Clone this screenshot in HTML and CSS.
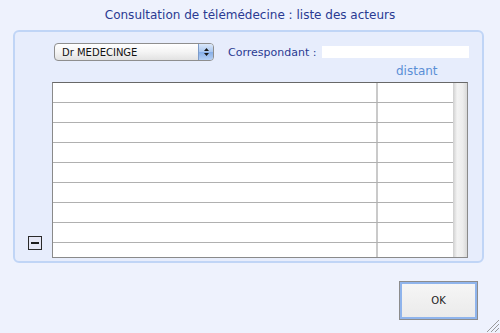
FILE: index.html
```html
<!doctype html>
<html>
<head>
<meta charset="utf-8">
<link rel="stylesheet" href="styles.css">
<title>Consultation de télémédecine</title>
</head>
<body>
<h1 class="title">Consultation de télémédecine : liste des acteurs</h1>

<div class="panel">
  <div class="top-row">
    <div class="popup">
      <span class="popup-text">Dr MEDECINGE</span>
      <span class="stepper">
        <svg width="7" height="10" viewBox="0 0 7 10"><path d="M3.5 1 L6 4 L1 4 Z M3.5 9 L6 6 L1 6 Z" fill="#1a1a1a"/></svg>
      </span>
    </div>
    <span class="label">Correspondant :</span>
    <span class="field"></span>
  </div>

  <div class="head-row"><span class="col-head">distant</span></div>

  <div class="list-row">
    <span class="minus-btn"><span class="minus-bar"></span></span>
    <div class="grid">
      <div class="rows">
        <div class="row"><span class="c1"></span><span class="c2"></span></div>
        <div class="row"><span class="c1"></span><span class="c2"></span></div>
        <div class="row"><span class="c1"></span><span class="c2"></span></div>
        <div class="row"><span class="c1"></span><span class="c2"></span></div>
        <div class="row"><span class="c1"></span><span class="c2"></span></div>
        <div class="row"><span class="c1"></span><span class="c2"></span></div>
        <div class="row"><span class="c1"></span><span class="c2"></span></div>
        <div class="row"><span class="c1"></span><span class="c2"></span></div>
        <div class="row"><span class="c1"></span><span class="c2"></span></div>
      </div>
      <div class="scroll"></div>
    </div>
  </div>
</div>

<div class="footer">
  <button class="ok">OK</button>
</div>

<svg class="grip" width="13" height="13" viewBox="0 0 13 13">
  <path d="M1 13 L13 1 M5 13 L13 5 M9 13 L13 9" stroke="#9a9a9a" stroke-width="1"/>
</svg>
</body>
</html>
```

FILE: styles.css
```css
html, body {
    margin: 0;
    padding: 0;
}
body {
    width: 500px;
    height: 333px;
    background-color: #eef2fd;
    font-family: "DejaVu Sans", Verdana, sans-serif;
    position: relative;
    overflow: hidden;
}
.title {
    margin: 0;
    padding: 8px 0;
    font-size: 12px;
    font-weight: normal;
    line-height: 14px;
    text-align: center;
    color: #2a3a92;
}
.panel {
    margin: 0 16px 0 13px;
    border: 2px solid #c0d5f6;
    border-radius: 6px;
    background-color: #e7edfc;
    padding: 11px 0 3px 0;
}
.top-row {
    display: flex;
    align-items: center;
    height: 18px;
}
.popup {
    margin-left: 39px;
    width: 160px;
    height: 18px;
    box-sizing: border-box;
    border: 1px solid #8e8e8e;
    border-radius: 4px;
    background: linear-gradient(#ffffff, #f4f4f4 50%, #e2e2e2);
    display: flex;
    align-items: center;
    overflow: hidden;
}
.popup-text {
    flex: 1;
    padding-left: 7px;
    font-size: 10px;
    color: #111;
}
.stepper {
    width: 14px;
    height: 16px;
    display: flex;
    align-items: center;
    justify-content: center;
    border-left: 1px solid #7d9cc9;
    background: linear-gradient(#dbe8fa, #a8c6ef 50%, #86aee8 51%, #b5d0f4);
}
.label {
    margin-left: 14px;
    font-size: 11px;
    color: #2a3a92;
}
.field {
    margin-left: 6px;
    width: 147px;
    height: 12px;
    background-color: #ffffff;
}
.head-row {
    margin-top: 3px;
    height: 14px;
    display: flex;
}
.col-head {
    margin-left: 381px;
    font-size: 12px;
    line-height: 14px;
    color: #5b8fd6;
}
.list-row {
    margin-top: 4px;
    display: flex;
    align-items: flex-end;
}
.minus-btn {
    margin: 0 0 8px 13px;
    width: 14px;
    height: 14px;
    box-sizing: border-box;
    border: 1px solid #2a2a2a;
    background-color: #e4e6f4;
    display: flex;
    align-items: center;
    justify-content: center;
}
.minus-bar {
    width: 8px;
    height: 2px;
    background-color: #1a1a1a;
}
.grid {
    margin-left: 10px;
    width: 416px;
    height: 176px;
    box-sizing: border-box;
    border: 1px solid #8a8a8a;
    border-top-color: #686868;
    background-color: #ffffff;
    display: flex;
    overflow: hidden;
}
.rows {
    flex: 1;
    overflow: hidden;
}
.row {
    display: flex;
    height: 19px;
    border-bottom: 1px solid #b0b0b0;
}
.c1 {
    width: 323px;
    border-right: 2px solid #cacaca;
}
.c2 {
    flex: 1;
}
.scroll {
    width: 14px;
    background: linear-gradient(to right, #cfcfcf, #f3f3f3 30%, #ededed 70%, #d8d8d8);
}
.footer {
    margin-top: 18px;
    padding-left: 399px;
}
.ok {
    width: 79px;
    height: 39px;
    border: 1px solid #8c8c8c;
    box-shadow: inset 0 0 0 2px #8fb4ec;
    background: linear-gradient(#f6f6f6, #eaeaea);
    font-family: "DejaVu Sans", Verdana, sans-serif;
    font-size: 10px;
    color: #222;
    padding: 0;
}
.grip {
    position: absolute;
    right: 1px;
    bottom: 1px;
}
```
